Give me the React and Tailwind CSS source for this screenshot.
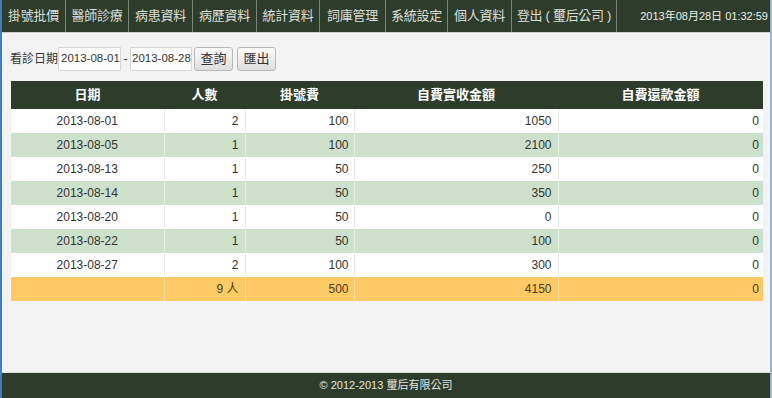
import React from 'react'

const navItems = [
  ['掛號批價', 'w-[64px]'],
  ['醫師診療', 'w-[63px]'],
  ['病患資料', 'w-[64px]'],
  ['病歷資料', 'w-[64px]'],
  ['統計資料', 'w-[63px]'],
  ['詞庫管理', 'w-[66px]'],
  ['系統設定', 'w-[62px]'],
  ['個人資料', 'w-[64px]'],
  ['登出 ( 璽后公司 )', 'w-[105px]'],
]

const rows = [
  ['2013-08-01', '2', '100', '1050', '0'],
  ['2013-08-05', '1', '100', '2100', '0'],
  ['2013-08-13', '1', '50', '250', '0'],
  ['2013-08-14', '1', '50', '350', '0'],
  ['2013-08-20', '1', '50', '0', '0'],
  ['2013-08-22', '1', '50', '100', '0'],
  ['2013-08-27', '2', '100', '300', '0'],
]

const font = { fontFamily: '"Liberation Sans", "Noto Sans CJK TC", sans-serif' }

const App = () => {
  return (
    <div className="h-[398px] w-[772px] flex flex-col bg-[#f4f3f3] border-l-2 border-l-[#3f7fc4] border-r-2 border-r-[#9fb2c6] text-[#333]" style={font}>
      <div className="h-[33px] flex bg-[#2e3d2b] border-b border-[#c9d1c9] shrink-0">
        {navItems.map(([item, w]) => (
          <div key={item} className={`${w} flex items-center justify-center text-[13px] text-[#dcdfda] border-r border-[#7e877c] whitespace-nowrap tracking-[-0.3px]`}>
            {item}
          </div>
        ))}
        <div className="flex-1 flex items-center justify-end pr-[2px] text-[11px] text-[#eceeea]">
          2013年08月28日 01:32:59
        </div>
      </div>
      <div className="flex-1 pl-[9px] pr-[7px]">
        <div className="flex items-center mt-[14px] h-[24px] text-[12px] whitespace-nowrap">
          <span className="ml-[-1px] w-[48px]">看診日期</span>
          <div className="w-[63px] h-[24px] bg-white border border-[#d6d6d6] flex items-center pl-[2px] text-[11.5px]">2013-08-01</div>
          <span className="w-[9px] text-center">-</span>
          <div className="w-[62px] h-[24px] bg-white border border-[#d6d6d6] flex items-center pl-[1px] text-[11.5px]">2013-08-28</div>
          <button className="ml-[2px] w-[39px] h-[24px] rounded-[3px] border border-[#b9b9b9] bg-gradient-to-b from-[#fbfbfb] to-[#dedede] text-[13px]">查詢</button>
          <button className="ml-[4px] w-[39px] h-[24px] rounded-[3px] border border-[#b9b9b9] bg-gradient-to-b from-[#fbfbfb] to-[#dedede] text-[13px]">匯出</button>
        </div>
        <table className="mt-[10px] w-[752px] border-collapse text-[12px] table-fixed">
          <colgroup>
            <col className="w-[153px]" />
            <col className="w-[81px]" />
            <col className="w-[109px]" />
            <col className="w-[204px]" />
            <col className="w-[205px]" />
          </colgroup>
          <thead>
            <tr className="h-[28px] bg-[#2e3d2b] text-white text-[13px] font-bold">
              <th>日期</th>
              <th>人數</th>
              <th>掛號費</th>
              <th>自費實收金額</th>
              <th>自費還款金額</th>
            </tr>
          </thead>
          <tbody>
            {rows.map((r, i) => (
              <tr key={r[0]} className={`h-[24px] ${i % 2 === 1 ? 'bg-[#cce0cb]' : 'bg-white'}`}>
                <td className="text-center border-r border-[#e3efe2]">{r[0]}</td>
                <td className="text-right pr-[6px] border-r border-[#e3efe2]">{r[1]}</td>
                <td className="text-right pr-[5px] border-r border-[#e3efe2]">{r[2]}</td>
                <td className="text-right pr-[6px] border-r border-[#e3efe2]">{r[3]}</td>
                <td className="text-right pr-[4px]">{r[4]}</td>
              </tr>
            ))}
            <tr className="h-[24px] bg-[#fdca66] text-[#4a3b1c]">
              <td className="border-r border-[#f6dc9e]"></td>
              <td className="text-right pr-[6px] border-r border-[#f6dc9e]">9 人</td>
              <td className="text-right pr-[5px] border-r border-[#f6dc9e]">500</td>
              <td className="text-right pr-[6px] border-r border-[#f6dc9e]">4150</td>
              <td className="text-right pr-[4px]">0</td>
            </tr>
          </tbody>
        </table>
      </div>
      <div className="h-[26px] shrink-0 bg-[#2e3d2b] border-t border-[#dfe3df] flex items-center justify-center text-[11px] text-[#e4e6e2]">
        © 2012-2013 璽后有限公司
      </div>
    </div>
  )
}

export default App
